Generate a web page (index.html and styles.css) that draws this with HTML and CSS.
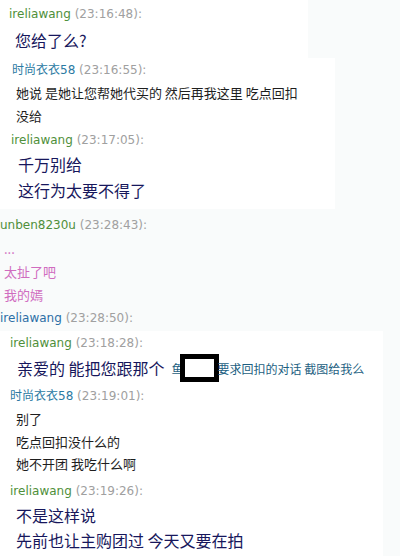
FILE: index.html
```html
<!DOCTYPE html>
<html lang="zh">
<head>
    <meta charset="UTF-8">
    <title>聊天记录</title>
    <link rel="stylesheet" href="styles.css">
</head>
<body>

    <div class="group g1">
        <div class="msg m1">
            <div class="head"><span class="who green">ireliawang</span> <span class="time">(23:16:48):</span></div>
            <div class="line big">您给了么?</div>
        </div>
    </div>

    <div class="group g2">
        <div class="msg m2">
            <div class="head"><span class="who teal">时尚衣衣58</span> <span class="time">(23:16:55):</span></div>
            <div class="line small">她说 是她让您帮她代买的 然后再我这里 吃点回扣</div>
            <div class="line small">没给</div>
        </div>
        <div class="msg m3">
            <div class="head"><span class="who green">ireliawang</span> <span class="time">(23:17:05):</span></div>
            <div class="line big wide">千万别给</div>
            <div class="line big wide">这行为太要不得了</div>
        </div>
    </div>

    <div class="plain">
        <div class="msg m4">
            <div class="head"><span class="who green">unben8230u</span> <span class="time">(23:28:43):</span></div>
            <div class="line pink">...</div>
            <div class="line pink">太扯了吧</div>
            <div class="line pink">我的嫣</div>
        </div>
        <div class="msg m4">
            <div class="head"><span class="who blue">ireliawang</span> <span class="time">(23:28:50):</span></div>
        </div>
    </div>

    <div class="group g3">
        <div class="msg m5 first">
            <div class="head"><span class="who green">ireliawang</span> <span class="time">(23:18:28):</span></div>
            <div class="line big boxed">
                <span>亲爱的 能把您跟那个</span>
                <span class="link fish">鱼</span>
                <span class="mask"></span>
                <span class="link after">要求回扣的对话 截图给我么</span>
            </div>
        </div>
        <div class="msg m6">
            <div class="head"><span class="who teal">时尚衣衣58</span> <span class="time">(23:19:01):</span></div>
            <div class="line small">别了</div>
            <div class="line small">吃点回扣没什么的</div>
            <div class="line small">她不开团 我吃什么啊</div>
        </div>
        <div class="msg m7">
            <div class="head"><span class="who green">ireliawang</span> <span class="time">(23:19:26):</span></div>
            <div class="line big">不是这样说</div>
            <div class="line big">先前也让主购团过 今天又要在拍</div>
        </div>
    </div>

</body>
</html>
```

FILE: styles.css
```css
body {
    margin: 0;
    background-color: #f9fbfb;
    font-family: "DejaVu Sans", "Noto Sans CJK SC", sans-serif;
    font-size: 12px;
}
.group {
    background-color: #fff;
}
.g1 {
    width: 308px;
    padding: 2px 0 5px;
}
.g2 {
    width: 335px;
    padding-bottom: 6px;
}
.plain {
    padding: 4px 0 2px;
}
.g3 {
    width: 383px;
    padding-bottom: 20px;
}
.head {
    height: 24px;
    line-height: 24px;
    white-space: nowrap;
}
.time {
    color: #a0a0a0;
}
.green {
    color: #4f8f3a;
}
.teal {
    color: #2b7aa3;
}
.blue {
    color: #2d6fa6;
}
.line {
    font-family: "Noto Sans CJK SC", sans-serif;
    white-space: nowrap;
}
.big {
    font-size: 16px;
    line-height: 25px;
    color: #17175c;
}
.big.wide {
    line-height: 25.5px;
}
.small {
    font-size: 13px;
    line-height: 22.5px;
    color: #1e1e1e;
}
.pink {
    font-size: 13px;
    line-height: 23px;
    color: #d06cbf;
}

/* indents per message */
.m1 .head { padding-left: 9px; }
.m1 .line { padding-left: 15px; margin-top: 2px; }
.m2 .head { padding-left: 12px; }
.m2 .line { padding-left: 16px; }
.m3 { margin-top: 1px; }
.m3 .head { padding-left: 11px; }
.m3 .line { padding-left: 18px; }
.m4 .head { padding-left: 0; }
.m4 .line { padding-left: 4px; }
.m5 { margin-top: -1px; }
.m5 .head { padding-left: 10px; }
.m5 .line { padding-left: 17px; }
.m6 { margin-top: 2px; }
.m6 .head { padding-left: 10px; }
.m6 .line { padding-left: 16px; }
.m7 { margin-top: 3px; }
.m7 .head { padding-left: 10px; }
.m7 .line { padding-left: 16px; }

/* line with the censored name */
.boxed {
    display: flex;
    align-items: center;
    height: 28px;
    margin-top: -1px;
}
.link {
    font-size: 12px;
    color: #1d5f82;
}
.fish {
    margin-left: 7px;
}
.mask {
    width: 29px;
    height: 18px;
    border: 5px solid #000;
    background-color: #fff;
    margin-left: -4px;
}
.after {
    margin-left: -1px;
}
```
